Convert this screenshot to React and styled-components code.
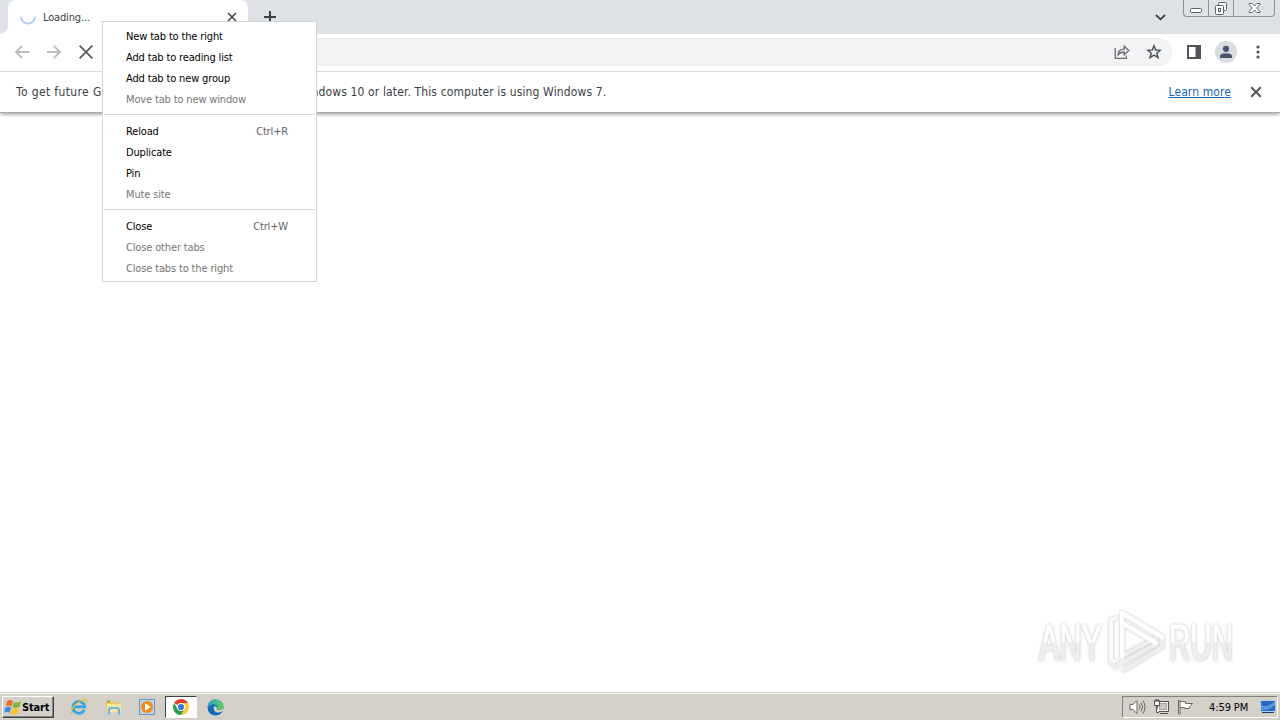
import React from "react";
import styled, { createGlobalStyle } from "styled-components";

const Global = createGlobalStyle`
  * { box-sizing: border-box; }
  body { margin: 0; background: #fff; overflow: hidden; }
  svg { display: block; flex: none; }
`;

const Desktop = styled.div`
  position: relative;
  width: 1280px;
  height: 720px;
  display: flex;
  flex-direction: column;
  overflow: hidden;
  background: #fff;
  font-family: "DejaVu Sans Condensed", "DejaVu Sans", sans-serif;
  font-stretch: condensed;
  font-size: 11px;
  color: #000;
`;

const Label = styled.span`
  white-space: pre;
  letter-spacing: ${(p) => p.$track || 0}px;
`;

const TabStrip = styled.header`
  display: flex;
  height: 34px;
  flex: none;
  background: #dee1e6;
  padding-left: 8px;
`;

const Tab = styled.div`
  position: relative;
  width: 240px;
  height: 34px;
  display: flex;
  align-items: center;
  padding: 0 11px 0 12px;
  background: #fff;
  border-radius: 8px 8px 0 0;
  color: #3c4043;
  & > span { margin: 0 auto 0 7px; }
  &::before, &::after {
    content: "";
    position: absolute;
    bottom: 0;
    width: 8px;
    height: 8px;
  }
  &::before {
    left: -8px;
    background: radial-gradient(circle at 0 0, transparent 7.5px, #fff 8px);
  }
  &::after {
    right: -8px;
    background: radial-gradient(circle at 100% 0, transparent 7.5px, #fff 8px);
  }
`;

const NewTab = styled.div`
  width: 44px;
  display: flex;
  align-items: center;
  justify-content: center;
`;

const StripEnd = styled.div`
  margin-left: auto;
  display: flex;
  padding-right: 5px;
`;

const TabSearch = styled.div`
  padding: 14px 17px 0 0;
`;

const Caption = styled.div`
  display: flex;
  width: 92px;
  height: 17px;
  border: 1px solid #8b8f96;
  border-top: 0;
  border-radius: 0 0 4px 4px;
`;

const CaptionButton = styled.div`
  width: ${(p) => p.$w}px;
  display: flex;
  justify-content: center;
  border-right: ${(p) => (p.$last ? "0" : "1px solid #8b8f96")};
`;

const Toolbar = styled.div`
  height: 38px;
  flex: none;
  display: flex;
  align-items: center;
  border-bottom: 1px solid #d9dbde;
  padding: 0 14px 1px 14px;
`;

const NavButtons = styled.div`
  display: flex;
  gap: 16px;
  width: 92px;
`;

const Omnibox = styled.div`
  width: 1066px;
  height: 28px;
  border-radius: 14px;
  background: #f1f3f4;
  display: flex;
  align-items: center;
  justify-content: flex-end;
  gap: 16px;
  padding-right: 10px;
`;

const Actions = styled.div`
  margin-left: auto;
  display: flex;
  align-items: center;
  gap: 13px;
  & > svg:first-child { margin-right: 1px; }
`;

const InfoBar = styled.div`
  height: 41px;
  flex: none;
  display: flex;
  align-items: center;
  padding: 0 18px 0 16px;
  border-bottom: 1px solid #a8a8a8;
  box-shadow: 0 3px 3px -1px rgba(0, 0, 0, 0.3);
  font-size: 12px;
  color: #3c4043;
`;

const Link = styled.a`
  margin: 0 19px 0 auto;
  color: #1967b8;
  text-decoration: underline;
  text-underline-offset: 1px;
  text-decoration-thickness: 1px;
`;

const Page = styled.main`
  flex: 1;
  display: flex;
  align-items: flex-end;
  justify-content: flex-end;
  padding: 0 32px 17px 0;
`;

const Menu = styled.div`
  position: absolute;
  left: 102px;
  top: 21px;
  width: 215px;
  height: 261px;
  padding: 4px 0;
  background: #fff;
  border: 1px solid #d4d4d4;
`;

const MenuItem = styled.div`
  height: 21px;
  display: flex;
  align-items: center;
  justify-content: space-between;
  padding: 0 28px 0 23px;
  color: ${(p) => (p.$off ? "#757575" : "#000")};
`;

const Shortcut = styled(Label)`
  color: #5f6368;
`;

const Divider = styled.div`
  height: 1px;
  margin: 4px 1px 6px;
  background: #d6d6d6;
`;

const Taskbar = styled.footer`
  height: 28px;
  flex: none;
  display: flex;
  align-items: center;
  background: #d4d0c8;
  border-top: 1px solid #d4d0c8;
  box-shadow: inset 0 1px 0 #fff;
  padding: 1px 2px 0;
`;

const StartButton = styled.div`
  width: 52px;
  height: 22px;
  display: flex;
  align-items: center;
  padding-left: 1px;
  border: 1px solid;
  border-color: #fff #404040 #404040 #fff;
  box-shadow: inset -1px -1px 0 #808080;
  font-weight: bold;
`;

const Launch = styled.div`
  display: flex;
  align-items: center;
  margin-left: 8px;
`;

const LaunchSlot = styled.div`
  width: ${(p) => (p.$active ? 32 : 34)}px;
  height: 22px;
  margin: 0 ${(p) => (p.$active ? 1 : 0)}px;
  display: flex;
  align-items: center;
  justify-content: center;
  background: ${(p) => (p.$active ? "#fff" : "transparent")};
  border: ${(p) => (p.$active ? "1px solid" : "0")};
  border-color: #404040 #fff #fff #404040;
`;

const Tray = styled.div`
  margin-left: auto;
  width: 156px;
  height: 22px;
  display: flex;
  align-items: center;
  padding-left: 6px;
  border: 1px solid;
  border-color: #808080 #fff #fff #808080;
  & > svg + svg { margin-left: 7px; }
  & > span { margin-left: 15px; }
  & > span + svg { margin-left: 12px; }
`;

const Cross = ({ size = 10, w = 1.8, color = "#45484c" }) => (
  <svg width={size} height={size} viewBox="0 0 10 10" stroke={color} strokeWidth={w}>
    <path d="M1 1L9 9M9 1L1 9" />
  </svg>
);

const Arrow = ({ flip }) => (
  <svg width="16" height="16" viewBox="0 0 16 16" fill="none" stroke="#b9bbbe" strokeWidth="1.8"
    transform={flip ? "scale(-1 1)" : undefined}>
    <path d="M15 8H2M8.2 1.8L2 8L8.2 14.2" />
  </svg>
);

const WatermarkArt = styled.svg`
  overflow: visible;
  filter: drop-shadow(0 0 1.5px rgba(0, 0, 0, 0.25));
`;

const Watermark = () => (
  <WatermarkArt width="212" height="66" viewBox="1036 608 212 66">
    <defs>
      <linearGradient id="fade" gradientUnits="userSpaceOnUse" x1="0" y1="610" x2="0" y2="670">
        <stop offset="0.5" stopColor="#fff" />
        <stop offset="0.54" stopColor="#eee" />
      </linearGradient>
    </defs>
    <g fill="url(#fade)" stroke="url(#fade)" strokeWidth="1.2" fontFamily="'Liberation Sans Narrow', 'Liberation Sans', sans-serif" fontSize="50">
      <text x="1039" y="659" textLength="63" lengthAdjust="spacingAndGlyphs">ANY</text>
      <text x="1169" y="659" textLength="64" lengthAdjust="spacingAndGlyphs">RUN</text>
    </g>
    <g fill="none" strokeLinejoin="round" strokeLinecap="round">
      <path d="M1115 617L1111 619V662L1115 660" stroke="#fafafa" strokeWidth="4" />
      <path d="M1122 655L1156 637M1124 669L1162 646V637M1122 655V662L1156 643M1111 662L1117 666" stroke="#eee" strokeWidth="4" />
      <path d="M1122 655V612L1162 636M1122 622L1156 642" stroke="#fff" strokeWidth="4.5" />
    </g>
  </WatermarkArt>
);

const menu = [
  ["New tab to the right"],
  ["Add tab to reading list"],
  ["Add tab to new group"],
  ["Move tab to new window", true],
  null,
  ["Reload", false, "Ctrl+R"],
  ["Duplicate"],
  ["Pin"],
  ["Mute site", true],
  null,
  ["Close", false, "Ctrl+W"],
  ["Close other tabs", true],
  ["Close tabs to the right", true],
];

const WindowsFlag = () => (
  <svg width="18" height="17" viewBox="0 0 17 16">
    <path d="M3 2Q6 0 8.5 2L7 7Q4 5 1.5 7Z" fill="#ed6b26" />
    <path d="M9.5 2.7Q12 4 16 2L14.5 7.5Q11 9 8 7.5Z" fill="#82b440" />
    <path d="M1.2 8Q4 6.5 6.7 8L5.2 13Q2.5 11.5 0 13Z" fill="#3f8edc" />
    <path d="M7.7 8.5Q11 10 14.2 8.5L12.7 14Q9.5 15.5 6.2 13.7Z" fill="#fbc32d" />
  </svg>
);

const Explorer = () => (
  <svg width="18" height="18" viewBox="0 0 18 18" fill="none">
    <path d="M14.2 11.8A5.9 5.9 0 1 1 14.7 8.8H4" stroke="#35a4df" strokeWidth="2.8" />
    <path d="M2 15.8C-1 13 6 4 13 2C18 .5 17 3.5 16 5" stroke="#eabf38" strokeWidth="1.3" />
  </svg>
);

const Folder = () => (
  <svg width="17" height="17" viewBox="0 0 17 17">
    <path d="M1 2.5L6 1.5L8 3H14.5V13H1Z" fill="#e8c866" />
    <path d="M2 5H16V13H2Z" fill="#f8e6a0" />
    <path d="M2 2.5H5" stroke="#5fa854" strokeWidth="1.5" />
    <path d="M4 15.5V11Q4 9 6.5 9H11.5Q14 9 14 11V15.5" fill="none" stroke="#6bb5df" strokeWidth="2.2" />
  </svg>
);

const Player = () => (
  <svg width="16" height="16" viewBox="0 0 16 16">
    <rect x=".5" y=".5" width="15" height="15" fill="#b8d5ec" stroke="#6796c3" />
    <circle cx="8" cy="8" r="6" fill="#f28b16" />
    <path d="M6 4.2L12 8L6 11.8Z" fill="#fff" />
  </svg>
);

const Chrome = () => (
  <svg width="16" height="16" viewBox="0 0 16 16">
    <path d="M8 8L1.1 4A8 8 0 0 1 14.9 4Z" fill="#e33b2e" />
    <path d="M8 8V4H14.9A8 8 0 0 1 8 16L11.5 10Z" fill="#fcc934" />
    <path d="M8 8L11.5 10L8 16A8 8 0 0 1 1.1 4L4.5 10Z" fill="#249b4b" />
    <circle cx="8" cy="8" r="4" fill="#fff" />
    <circle cx="8" cy="8" r="3.1" fill="#3279e6" />
  </svg>
);

const Edge = () => (
  <svg width="17" height="17" viewBox="0 0 17 17">
    <defs>
      <linearGradient id="edge" x2="1" y2="0.3">
        <stop stopColor="#2aa2dc" /><stop offset="1" stopColor="#5ccb58" />
      </linearGradient>
    </defs>
    <circle cx="8.5" cy="8.5" r="8" fill="#1769b7" />
    <path d="M.5 9C.8 3 4.5.5 8.5.5C13.5.5 16.5 4 16.5 7.5C16.5 10 14 11.5 11.5 11C9.5 10.5 10.5 9.5 10.4 8C10 4.5 3 4 .5 9Z" fill="url(#edge)" />
    <path d="M7.3 7.2C5.5 9.5 7.5 13.7 12 13.5L15.3 12.5C16 12 16.5 10 16.5 9C14 11.7 10 11.3 9.8 10C10.5 9 10 7.3 7.3 7.2Z" fill="#d4d0c8" />
  </svg>
);

export default function App() {
  return (
    <Desktop>
      <Global />
      <TabStrip>
        <Tab>
          <svg width="16" height="16" viewBox="0 0 16 16" fill="none" stroke="#b9d3f5" strokeWidth="2">
            <path d="M1 7.5A7 7 0 0 0 15 7.5" />
          </svg>
          <Label $track={-0.15}>Loading...</Label>
          <Cross w={1.7} />
        </Tab>
        <NewTab>
          <svg width="12" height="12" viewBox="0 0 12 12" stroke="#3c4043" strokeWidth="2"><path d="M6 0V12M0 6H12" /></svg>
        </NewTab>
        <StripEnd>
          <TabSearch>
            <svg width="11" height="7" viewBox="0 0 11 7" fill="none" stroke="#3c4043" strokeWidth="1.8"><path d="M1 1L5.5 5.3L10 1" /></svg>
          </TabSearch>
          <Caption>
            <CaptionButton $w={25}>
              <svg width="14" height="16" viewBox="0 0 14 16"><rect x="1.5" y="8.5" width="11" height="4" rx="1" fill="#fff" stroke="#5f6368" /></svg>
            </CaptionButton>
            <CaptionButton $w={25}>
              <svg width="14" height="16" viewBox="0 0 14 16" fill="#fff" stroke="#5f6368"><rect x="4.5" y="2.5" width="8" height="8" rx="1" /><rect x="1.5" y="5.5" width="8" height="9" rx="1" /><rect x="4.5" y="8.5" width="2" height="3" /></svg>
            </CaptionButton>
            <CaptionButton $w={40} $last>
              <svg width="13" height="16" viewBox="0 0 13 16"><path d="M1 3.5H4.2L6.5 6L8.8 3.5H12V4.5L8.6 8L12 11.5V12.5H8.8L6.5 10L4.2 12.5H1V11.5L4.4 8L1 4.5Z" fill="#fff" stroke="#5f6368" /></svg>
            </CaptionButton>
          </Caption>
        </StripEnd>
      </TabStrip>

      <Toolbar>
        <NavButtons>
          <Arrow />
          <Arrow flip />
          <Cross size={16} w={1.1} color="#55585c" />
        </NavButtons>
        <Omnibox>
          <svg width="16" height="16" viewBox="0 0 16 16" fill="none" stroke="#686b70" strokeWidth="1.3">
            <path d="M1.2 4V14.3H12.3V11.5M4 10.8C4.3 7.2 6.5 5.2 10.2 5.2V2.2L14.8 6.5L10.2 10.7V8C7.5 8 5.5 8.8 4 10.8Z" />
          </svg>
          <svg width="16" height="16" viewBox="0 0 16 16" fill="none" stroke="#505358" strokeWidth="1.5">
            <path d="M8 1.8L9.7 6L14.3 6.3L10.8 9.2L12 13.7L8 11.2L4 13.7L5.2 9.2L1.7 6.3L6.3 6Z" />
          </svg>
        </Omnibox>
        <Actions>
          <svg width="14" height="14" viewBox="0 0 14 14"><path d="M1 1H13V13H1Z" fill="none" stroke="#505357" strokeWidth="2" /><path d="M8.5 0H14V14H8.5Z" fill="#505357" /></svg>
          <svg width="22" height="22" viewBox="0 0 22 22"><circle cx="11" cy="11" r="11" fill="#d9dce1" /><circle cx="11" cy="7.8" r="3.1" fill="#48546b" /><path d="M5 17V15.3Q5 12.3 11 12.3T17 15.3V17Z" fill="#48546b" /></svg>
          <svg width="16" height="16" viewBox="0 0 16 16" fill="#505357"><circle cx="8" cy="3" r="1.6" /><circle cx="8" cy="8" r="1.6" /><circle cx="8" cy="13" r="1.6" /></svg>
        </Actions>
      </Toolbar>

      <InfoBar>
        <Label $track={0.13}>
          <Label $track={0.37}>To get future </Label>
          Google Chrome updates, you'll need Windows 10 or later. This computer is using Windows 7.
        </Label>
        <Link><Label $track={0.1}>Learn more</Label></Link>
        <Cross size={12} w={1.6} color="#505357" />
      </InfoBar>

      <Page><Watermark /></Page>

      <Taskbar>
        <StartButton><WindowsFlag /><Label $track={-0.15}>Start</Label></StartButton>
        <Launch>
          <LaunchSlot><Explorer /></LaunchSlot>
          <LaunchSlot><Folder /></LaunchSlot>
          <LaunchSlot><Player /></LaunchSlot>
          <LaunchSlot $active><Chrome /></LaunchSlot>
          <LaunchSlot><Edge /></LaunchSlot>
        </Launch>
        <Tray>
          <svg width="17" height="16" viewBox="0 0 17 16" fill="none" stroke="#6b6963">
            <path d="M1 5.5H4L8 1.5V14.5L4 10.5H1Z" fill="#fff" /><path d="M10 5.5Q12 8 10 10.5M12 3.5Q15 8 12 12.5M14 1.5Q18 8 14 14.5" />
          </svg>
          <svg width="17" height="16" viewBox="0 0 17 16" fill="#f4f4f2" stroke="#55534f">
            <path d="M4.5 2.5H15.5V12.5H4.5Z" /><path d="M6.5 4.5H13.5V10.5H6.5Z" fill="#c9c7c2" stroke="#a5a39e" /><path d="M7 14.5H15M1.5 1.5H6.5V6.5H1.5ZM3.5 6.5V13.5H6M3 0V3M5 0V3" />
          </svg>
          <svg width="17" height="16" viewBox="0 0 17 16" fill="#fff" stroke="#6b6963">
            <path d="M1.5 15V1.5H3V15ZM3 2.5H8.5V4.5H15.5L13 7.5L12 9.5H7.5V8.5H3" />
          </svg>
          <Label $track={-0.1}>4:59 PM</Label>
          <svg width="16" height="14" viewBox="0 0 16 14"><rect x=".5" y=".5" width="15" height="11" fill="#2968c2" stroke="#b7cee7" /><path d="M1 10V5Q8 8 15 1V5Q9 11 1 10Z" fill="#5697df" /><path d="M2 12.5H14" stroke="#174071" /></svg>
        </Tray>
      </Taskbar>

      <Menu>
        {menu.map((m, i) =>
          m ? (
            <MenuItem key={i} $off={m[1]}>
              <Label $track={-0.15}>{m[0]}</Label>
              {m[2] && <Shortcut $track={-0.15}>{m[2]}</Shortcut>}
            </MenuItem>
          ) : (
            <Divider key={i} />
          )
        )}
      </Menu>
    </Desktop>
  );
}
